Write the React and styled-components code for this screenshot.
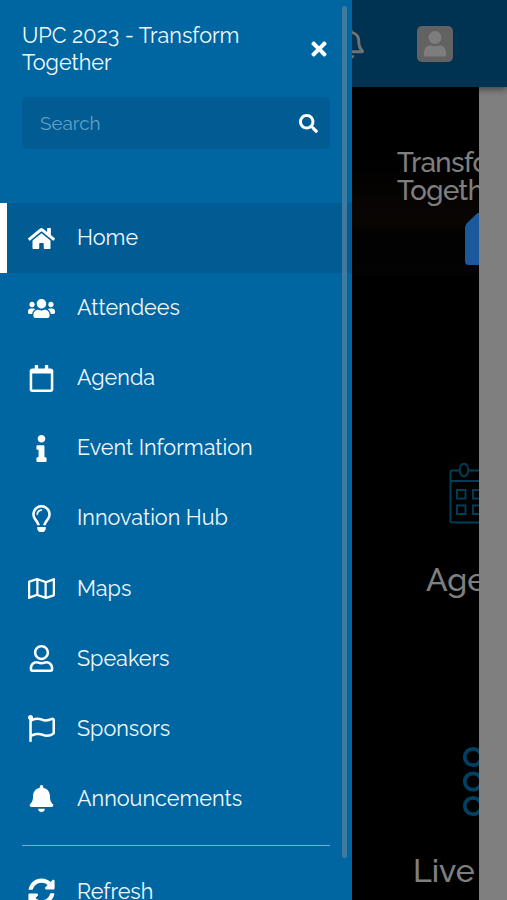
import React from "react";
import styled, { createGlobalStyle } from "styled-components";
import {
  FaBell,
  FaHome,
  FaInfo,
  FaRegBell,
  FaRegCalendar,
  FaRegFlag,
  FaRegLightbulb,
  FaRegMap,
  FaRegUser,
  FaSearch,
  FaSyncAlt,
  FaTimes,
  FaUsers,
} from "react-icons/fa";

const menu = [
  { label: "Home", icon: FaHome, active: true },
  { label: "Attendees", icon: FaUsers },
  { label: "Agenda", icon: FaRegCalendar },
  { label: "Event Information", icon: FaInfo },
  { label: "Innovation Hub", icon: FaRegLightbulb },
  { label: "Maps", icon: FaRegMap },
  { label: "Speakers", icon: FaRegUser },
  { label: "Sponsors", icon: FaRegFlag },
  { label: "Announcements", icon: FaBell },
];

function PersonIcon() {
  return (
    <svg width="22" height="26" viewBox="0 0 22 26">
      <circle cx="11" cy="6.5" r="6.5" />
      <path d="M0 25.5v-3.5c0-5 3-7.5 6.5-7.5 1.5.6 3 .8 4.5.8s3-.2 4.5-.8c3.5 0 6.5 2.5 6.5 7.5v3.5z" />
    </svg>
  );
}

function CalendarIcon() {
  return (
    <svg width="60" height="64" viewBox="0 0 60 64" fill="none" stroke="#007cb0" strokeWidth="1.9">
      <path d="M11 8.5H4a1.5 1.5 0 0 0-1.5 1.5v49a1.5 1.5 0 0 0 1.5 1.5h54V8.5H21M2.5 19h57" />
      <ellipse cx="16" cy="8" rx="4.3" ry="6.3" />
      <path d="M9 28h8.5v8.5H9zM25 28h8.5v8.5H25zM9 43.5h8.5v8.5H9zM25 43.5h8.5v8.5H25z" />
    </svg>
  );
}

function RingsIcon() {
  return (
    <svg width="30" height="72" viewBox="0 0 30 72" fill="none" stroke="#0080c4" strokeWidth="3.8">
      <circle cx="11" cy="11" r="8.2" />
      <circle cx="11" cy="35.5" r="8.2" />
      <circle cx="11" cy="60" r="8.2" />
    </svg>
  );
}

export default function App() {
  return (
    <Screen>
      <GlobalStyle />
      <Header>
        <FaRegBell size={31} />
        <Avatar>
          <PersonIcon />
        </Avatar>
      </Header>
      <Content>
        <Hero>
          <HeroTitle>
            Transform
            <br />
            Together
          </HeroTitle>
          <HeroShape viewBox="0 0 14 52">
            <path d="M12.5 0H14V52H4a4 4 0 0 1-4-4V15q0-3 2-5z" fill="#1b599c" />
          </HeroShape>
        </Hero>
        <Tile $top={186} $left={448} $text={426}>
          <CalendarIcon />
          <p>Agenda</p>
        </Tile>
        <Tile $top={147} $left={462} $text={413} $gap={34}>
          <RingsIcon />
          <p>Live</p>
        </Tile>
      </Content>

      <Backdrop />
      <Drawer>
        <DrawerTop>
          <Title>
            UPC 2023 - Transform
            <br />
            Together
          </Title>
          <FaTimes size={22} />
        </DrawerTop>
        <SearchBox>
          <span>Search</span>
          <FaSearch size={19} />
        </SearchBox>
        <Menu>
          {menu.map(({ label, icon: Icon, active }) => (
            <MenuItem key={label} $active={active}>
              <Icon />
              <Label>{label}</Label>
            </MenuItem>
          ))}
        </Menu>
        <Divider />
        <MenuItem>
          <FaSyncAlt />
          <Label>Refresh</Label>
        </MenuItem>
        <ScrollThumb />
      </Drawer>
    </Screen>
  );
}

const GlobalStyle = createGlobalStyle`
  * {
    box-sizing: border-box;
    margin: 0;
    padding: 0;
  }
  body {
    background: #fff;
    font-family: Raleway, Lato, "Open Sans", sans-serif;
  }
  svg {
    flex-shrink: 0;
  }
`;

const Screen = styled.div`
  position: relative;
  height: 900px;
  overflow: hidden;
`;

const Header = styled.header`
  position: relative;
  z-index: 1;
  display: flex;
  align-items: center;
  justify-content: flex-end;
  gap: 51px;
  height: 87px;
  padding-right: 54px;
  background: #0066a3;
  color: #e4e4e4;
  box-shadow: 0 2px 7px rgba(0, 0, 0, 0.5);
`;

const Avatar = styled.div`
  display: flex;
  align-items: center;
  justify-content: center;
  width: 36px;
  height: 36px;
  border-radius: 5px;
  background: #c4c4c4;

  svg {
    fill: #fafafa;
  }
`;

const Content = styled.main`
  width: 479px;
  height: 813px;
  overflow: hidden;
  background: #000;
`;

const Hero = styled.section`
  height: 189px;
  padding: 61px 0 0 397px;
  background: linear-gradient(#000 35%, #0e0806 62%, #150c08 70%, #060404 78%, #080505 100%);
`;

const HeroTitle = styled.h1`
  font-size: 27.5px;
  font-weight: 500;
  line-height: 28px;
  letter-spacing: -0.5px;
  color: #fff;
`;

/* stays brighter than the rest of the dimmed page */
const HeroShape = styled.svg`
  position: relative;
  z-index: 3;
  display: block;
  width: 14px;
  height: 52px;
  margin: 9px 0 0 68px;
`;

const Tile = styled.section`
  padding-top: ${(p) => p.$top}px;

  svg {
    display: block;
    margin-left: ${(p) => p.$left}px;
  }
  p {
    margin: ${(p) => p.$gap || 35}px 0 0 ${(p) => p.$text}px;
    font-size: 32px;
    font-weight: 500;
    line-height: 38px;
    color: #fff;
  }
`;

const Backdrop = styled.div`
  position: absolute;
  inset: 0;
  z-index: 2;
  background: rgba(0, 0, 0, 0.5);
`;

const Drawer = styled.aside`
  position: absolute;
  top: 0;
  left: 0;
  z-index: 4;
  width: 352px;
  height: 900px;
  overflow: hidden;
  background: #0066a1;
  color: #fff;
`;

const DrawerTop = styled.div`
  display: flex;
  align-items: center;
  justify-content: space-between;
  padding: 22px 22px 0 22px;
`;

const Title = styled.h2`
  font-size: 21.6px;
  font-weight: 400;
  line-height: 27px;
  color: #f2f9fd;
`;

const SearchBox = styled.div`
  display: flex;
  align-items: center;
  justify-content: space-between;
  width: 308px;
  height: 52px;
  margin: 21px 0 0 22px;
  padding: 0 12px 0 18px;
  border-radius: 5px;
  background: #005c92;

  span {
    font-size: 18.9px;
    line-height: 24px;
    color: #66a0c4;
  }
`;

const Menu = styled.nav`
  margin-top: 54px;
`;

const MenuItem = styled.div`
  display: flex;
  align-items: center;
  gap: 22px;
  height: 70.1px;
  padding-left: ${(p) => (p.$active ? 21 : 28)}px;
  border-left: ${(p) => (p.$active ? "7px solid #fff" : "none")};
  background: ${(p) => (p.$active ? "#005c92" : "transparent")};

  svg {
    width: 27px;
    height: 27px;
  }
`;

const Label = styled.span`
  font-size: 21.6px;
  line-height: 28px;
  color: #f2f9fd;
`;

const Divider = styled.hr`
  width: 308px;
  height: 1px;
  margin: 11px 0 11px 22px;
  border: 0;
  background: #74b0d5;
`;

const ScrollThumb = styled.div`
  position: absolute;
  top: 6px;
  right: 5px;
  width: 5px;
  height: 852px;
  border-radius: 3px;
  background: #407a9e;
`;
